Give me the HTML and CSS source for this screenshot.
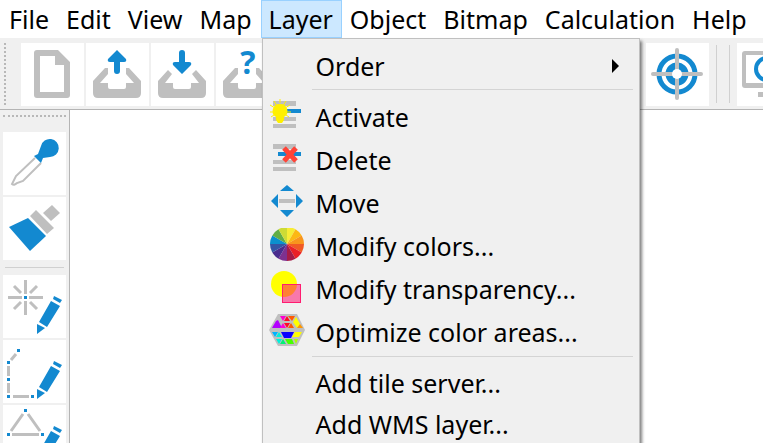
FILE: index.html
```html
<!DOCTYPE html>
<html lang="en">
  <head>
    <meta charset="UTF-8" />
    <meta name="viewport" content="width=device-width, initial-scale=1.0" />
    <title>Map Editor</title>
    <link rel="stylesheet" href="styles.css">
  </head>
  <body>
    <!-- Shared shapes -->
    <svg class="defs" aria-hidden="true">
      <symbol id="pencil" viewBox="0 0 63 63">
        <path class="blue" d="M51 21L59 25L57 28L50 24ZM48 26L57 31L44 52L36 47ZM34 49L42 53L34 59Z" />
      </symbol>
      <symbol id="tray" viewBox="0 0 63 63">
        <path class="gray" d="M7 38L19 25H22V31L14 40H22V44Q22 46 24 46H38Q40 46 40 44V40H48L40 31V25H43L55 38V50Q55 55 50 55H12Q7 55 7 50Z" />
      </symbol>
    </svg>

    <!-- Menu bar -->
    <nav class="menubar">
      <div class="menu"><button type="button">File</button></div>
      <div class="menu"><button type="button">Edit</button></div>
      <div class="menu"><button type="button">View</button></div>
      <div class="menu"><button type="button">Map</button></div>
      <div class="menu open">
        <button type="button" aria-expanded="true">Layer</button>
        <div class="dropdown">
          <button type="button" class="item submenu">
            <span>Order</span>
            <svg class="arrow" width="7" height="14" viewBox="0 0 7 14"><path d="M0 0L7 7L0 14Z" /></svg>
          </button>
          <hr>
          <button type="button" class="item with-icon">
            <svg width="35" height="35" viewBox="0 0 35 35">
              <path class="gray" d="M3 2H26V7H3ZM3 18H26V22H3ZM3 25H26V29H3Z" />
              <path class="blue" d="M15 10H31V14H15Z" />
              <path d="M10 0V4M10 12L16 2M10 12L4 2M10 12L20 6M10 12L0 6M0 13H21M10 12L19 18M10 12L1 18" stroke="#fff000" />
              <path d="M10 5A7 7 0 0 1 14 18V21L12 24H8L6 21V18A7 7 0 0 1 10 5Z" fill="#fff000" />
            </svg>
            <span>Activate</span>
          </button>
          <button type="button" class="item with-icon">
            <svg width="35" height="35" viewBox="0 0 35 35">
              <path class="gray" d="M3 2H26V7H3ZM3 18H26V22H3ZM3 25H26V29H3Z" />
              <path class="blue" d="M8 10H31V14H8Z" />
              <path d="M14 6L26 19M26 6L14 19" stroke="#ff4438" stroke-width="5" />
            </svg>
            <span>Delete</span>
          </button>
          <button type="button" class="item with-icon">
            <svg width="35" height="35" viewBox="0 0 35 35">
              <path class="blue" d="M17 0L24 6H10ZM1 16L8 9V23ZM33 16L26 9V23ZM17 32L24 25H10Z" />
              <path class="gray" d="M9 14H25V18H9Z" />
            </svg>
            <span>Move</span>
          </button>
          <button type="button" class="item with-icon">
            <svg width="35" height="35" viewBox="0 0 35 35">
              <g transform="translate(17 16)">
                <path fill="#f7ec35" d="M0 0V-17A17 17 0 0 1 8.500 -14.700Z" />
                <path fill="#fcb814" d="M0 0L8.500 -14.700A17 17 0 0 1 14.700 -8.500Z" />
                <path fill="#f8951d" d="M0 0L14.700 -8.500A17 17 0 0 1 17 0Z" />
                <path fill="#f15a24" d="M0 0H17A17 17 0 0 1 14.700 8.500Z" />
                <path fill="#ea2127" d="M0 0L14.700 8.500A17 17 0 0 1 8.500 14.700Z" />
                <path fill="#a61c48" d="M0 0L8.500 14.700A17 17 0 0 1 0 17Z" />
                <path fill="#7d3190" d="M0 0V17A17 17 0 0 1 -8.500 14.700Z" />
                <path fill="#4a2c8e" d="M0 0L-8.500 14.700A17 17 0 0 1 -14.700 8.500Z" />
                <path fill="#3455a4" d="M0 0L-14.700 8.500A17 17 0 0 1 -17 0Z" />
                <path fill="#0b90cd" d="M0 0H-17A17 17 0 0 1 -14.700 -8.500Z" />
                <path fill="#62ae45" d="M0 0L-14.700 -8.500A17 17 0 0 1 -8.500 -14.700Z" />
                <path fill="#cddb35" d="M0 0L-8.500 -14.700A17 17 0 0 1 0 -17Z" />
              </g>
            </svg>
            <span>Modify colors...</span>
          </button>
          <button type="button" class="item with-icon">
            <svg width="35" height="35" viewBox="0 0 35 35">
              <circle cx="14" cy="13" r="13" fill="#ffff00" />
              <rect x="12.500" y="13.500" width="18" height="18" fill="#ff0066" fill-opacity="0.5" stroke="#ff1c70" />
            </svg>
            <span>Modify transparency...</span>
          </button>
          <button type="button" class="item with-icon">
            <svg width="35" height="35" viewBox="0 0 35 35" overflow="visible">
              <path class="gray" d="M8 0H27L35 16L27 32H8L-1 16Z" />
              <path fill="#b400ff" d="M8 6L12 14H2L6 7Z" />
              <path fill="#ff00d0" d="M10 2H16L13 7ZM13 9L16 14H10Z" />
              <path fill="#ff0a28" d="M17 7L14 7L17 2L20 7ZM14 9H20L17 14Z" />
              <path fill="#ff5a00" d="M18 2H25L22 7ZM21 9L24 14H18Z" />
              <path fill="#ffff00" d="M26 3L30 10L27 14L23 8ZM25 18H32L29 23H22Z" />
              <path fill="#ff9600" d="M30 10L33 14H27Z" />
              <path fill="#00b4ff" d="M2 18H8L5 23Z" />
              <path fill="#00f0dc" d="M9 18L12 23H6ZM6 25H12L9 30Z" />
              <path fill="#0a00ff" d="M11 18H24L21 24H14Z" />
              <path fill="#00f078" d="M13 25L16 30H10Z" />
              <path fill="#46ff00" d="M15 25H22L24 30H18Z" />
              <path fill="#aaff00" d="M24 25H28L26 30Z" />
            </svg>
            <span>Optimize color areas...</span>
          </button>
          <hr>
          <button type="button" class="item"><span>Add tile server...</span></button>
          <button type="button" class="item"><span>Add WMS layer...</span></button>
        </div>
      </div>
      <div class="menu"><button type="button">Object</button></div>
      <div class="menu"><button type="button">Bitmap</button></div>
      <div class="menu"><button type="button">Calculation</button></div>
      <div class="menu"><button type="button">Help</button></div>
    </nav>

    <!-- Top toolbar -->
    <div class="toolbar">
      <div class="handle"></div>
      <div class="group">
        <button type="button" class="tool" aria-label="New">
          <svg viewBox="0 0 63 63">
            <path class="gray" fill-rule="evenodd" d="M16 7H37L49 19V52Q49 55 46 55H16Q13 55 13 52V10Q13 7 16 7ZM19 13V49H43V22H34V13Z" />
          </svg>
        </button>
        <button type="button" class="tool" aria-label="Open">
          <svg viewBox="0 0 63 63">
            <use href="#tray" />
            <path class="blue" d="M31 7L40 16Q41 19 38 19H34V28Q34 31 31 31Q28 31 28 28V19H24Q21 19 22 16Z" />
          </svg>
        </button>
        <button type="button" class="tool" aria-label="Save">
          <svg viewBox="0 0 63 63">
            <path class="gray" d="M7 38L17 27L21 31L14 40H22V44Q22 46 24 46H38Q40 46 40 44V40H48L41 31L45 27L55 38V50Q55 55 50 55H12Q7 55 7 50Z" />
            <path class="blue" d="M31 31L40 22Q41 19 38 19H34V10Q34 7 31 7Q28 7 28 10V19H24Q21 19 22 22Z" />
          </svg>
        </button>
        <button type="button" class="tool" aria-label="Open recent">
          <svg viewBox="0 0 63 63">
            <use href="#tray" />
            <text class="question" x="32" y="31" text-anchor="middle">?</text>
          </svg>
        </button>
      </div>
      <div class="group locate">
        <button type="button" class="tool" aria-label="Center">
          <svg viewBox="0 0 63 63">
            <g fill="none" stroke="#1389d0">
              <circle cx="31" cy="31" r="18" stroke-width="5" />
              <circle cx="31" cy="31" r="8" stroke-width="7" />
            </g>
            <path d="M31 7V26M31 36V55M7 31H26M36 31H55" stroke="#bfbfbf" stroke-width="4" stroke-linecap="round" />
            <circle cx="31" cy="31" r="5" fill="#fff" />
          </svg>
        </button>
      </div>
      <div class="divider"></div>
      <div class="divider"></div>
      <div class="group">
        <button type="button" class="tool" aria-label="Zoom">
          <svg viewBox="0 0 63 63">
            <path class="gray" fill-rule="evenodd" d="M8 8H55Q58 8 58 11V42Q58 45 55 45H8Q5 45 5 42V11Q5 8 8 8ZM9 12V40H54V12Z" />
            <path class="gray" d="M21 49H42V54H21Z" />
            <circle cx="30" cy="26" r="11" fill="none" stroke="#1389d0" stroke-width="4" />
          </svg>
        </button>
      </div>
    </div>

    <main class="workspace">
      <!-- Drawing tools -->
      <div class="toolbox">
        <div class="handle"></div>
        <button type="button" class="tool" aria-label="Pick color">
          <svg viewBox="0 0 63 63">
            <path d="M32 26L13 44L9 52Q11 54 14 51L20 49L38 31" fill="none" stroke="#bfbfbf" stroke-width="2" />
            <path class="blue" d="M31 24L35 22L38 14A9 9 0 1 1 47 25L40 26L38 31Z" />
          </svg>
        </button>
        <button type="button" class="tool" aria-label="Brush">
          <svg viewBox="0 0 63 63">
            <path class="blue" d="M6 30L25 21L43 39L27 54Z" />
            <path class="gray" d="M27 19L33 13L51 31L44 37ZM49 8L57 16L48 24L40 16Z" />
          </svg>
        </button>
        <hr>
        <button type="button" class="tool" aria-label="Draw point">
          <svg viewBox="0 0 63 63">
            <path d="M5 22.500H19M26 22.500H40M22.500 5V19M22.500 26V40M11 11L18 18M27 18L34 11M11 34L18 27M27 27L34 34" stroke="#bfbfbf" stroke-width="3" />
            <path class="blue" d="M21 21H24V24H21Z" />
            <use href="#pencil" />
          </svg>
        </button>
        <button type="button" class="tool" aria-label="Draw line">
          <svg viewBox="0 0 63 63">
            <path d="M13 14L8 20M5.500 26V36M5.500 43V53M10 56.500H26" stroke="#bfbfbf" stroke-width="3" />
            <path class="blue" d="M14 9H17V12H14ZM4 21H7V24H4ZM4 38H7V41H4ZM4 55H7V58H4ZM28 55H31V58H28Z" />
            <use href="#pencil" />
          </svg>
        </button>
        <button type="button" class="tool" aria-label="Draw area">
          <svg viewBox="0 0 63 63">
            <path d="M20 9L8 26M25 9L37 26M9 29.500H36" stroke="#bfbfbf" stroke-width="3" />
            <path class="blue" d="M21 4H24V7H21ZM4 28H7V31H4ZM38 28H41V31H38Z" />
            <use href="#pencil" />
          </svg>
        </button>
      </div>
      <div class="canvas"></div>
    </main>
  </body>
</html>
```

FILE: styles.css
```css
* {
  box-sizing: border-box;
}
body {
  margin: 0;
  height: 100vh;
  overflow: hidden;
  display: flex;
  flex-direction: column;
  font-family: "Segoe UI", "Noto Sans", sans-serif;
  font-size: 25px;
  color: #000;
  background-color: #f0f0f0;
}
button {
  margin: 0;
  padding: 0;
  border: none;
  background: none;
  font: inherit;
  color: inherit;
}
svg {
  display: block;
  flex: none;
}
.defs {
  position: absolute;
  width: 0;
  height: 0;
}
.blue {
  fill: #1389d0;
}
.gray {
  fill: #bfbfbf;
}

/* Menu bar */
.menubar {
  flex: none;
  display: flex;
  height: 38px;
  padding-left: 1px;
  background-color: #fff;
}
.menu {
  position: relative;
}
.menu > button {
  height: 38px;
  padding: 0 8px 0 7px;
  border: 1px solid transparent;
  line-height: 36px;
}
.menu.open > button {
  border-color: #99d1ff;
  background-color: #cce8ff;
}
.dropdown {
  position: absolute;
  z-index: 1;
  top: 100%;
  left: 1px;
  width: 378px;
  padding: 6px;
  border: 1px solid #c0c0c0;
  background-color: #f0f0f0;
  box-shadow: 2px 3px 3px rgba(0, 0, 0, 0.5);
}
.dropdown hr {
  height: 1px;
  margin: 3px 0 5px 43px;
  border: none;
  background-color: #d4d4d4;
}
.item {
  display: flex;
  align-items: center;
  width: 100%;
  height: 41px;
  padding-left: 47px;
  text-align: left;
  white-space: nowrap;
}
.item.with-icon {
  height: 43px;
  gap: 11px;
  padding-left: 1px;
}
.item.submenu {
  justify-content: space-between;
}
.arrow {
  margin-right: 14px;
}

/* Toolbars */
.toolbar {
  flex: none;
  display: flex;
  height: 72px;
  padding: 4px 0 4px 4px;
  border-top: 1px solid #f0f0f0;
  border-bottom: 1px solid #b4b4b4;
  overflow: hidden;
}
.toolbar .handle {
  flex: none;
  width: 3px;
  margin-right: 14px;
  border-left: 2px dotted #b8b8b8;
}
.group {
  flex: none;
  display: flex;
  gap: 2px;
}
.group.locate {
  margin-left: 367px;
}
.tool {
  flex: none;
  width: 63px;
  height: 63px;
  background-color: #fff;
}
.question {
  fill: #1389d0;
  font-family: "Open Sans", sans-serif;
  font-size: 32px;
  font-weight: bold;
}
.divider {
  flex: none;
  width: 1px;
  margin: 2px 5px 2px 7px;
  background-color: #d0d0d0;
}
.divider + .group {
  margin-left: 2px;
}

.workspace {
  flex: 1;
  display: flex;
  min-height: 0;
}
.toolbox {
  flex: none;
  display: flex;
  flex-direction: column;
  gap: 2px;
  width: 70px;
  padding: 5px 3px 0;
  border-right: 1px solid #b4b4b4;
  overflow: hidden;
}
.toolbox .handle {
  flex: none;
  height: 15px;
  border-top: 2px dotted #b8b8b8;
}
.toolbox hr {
  flex: none;
  width: 59px;
  height: 1px;
  margin: 5px 2px;
  border: none;
  background-color: #d0d0d0;
}
.canvas {
  flex: 1;
  background-color: #fff;
}
```
